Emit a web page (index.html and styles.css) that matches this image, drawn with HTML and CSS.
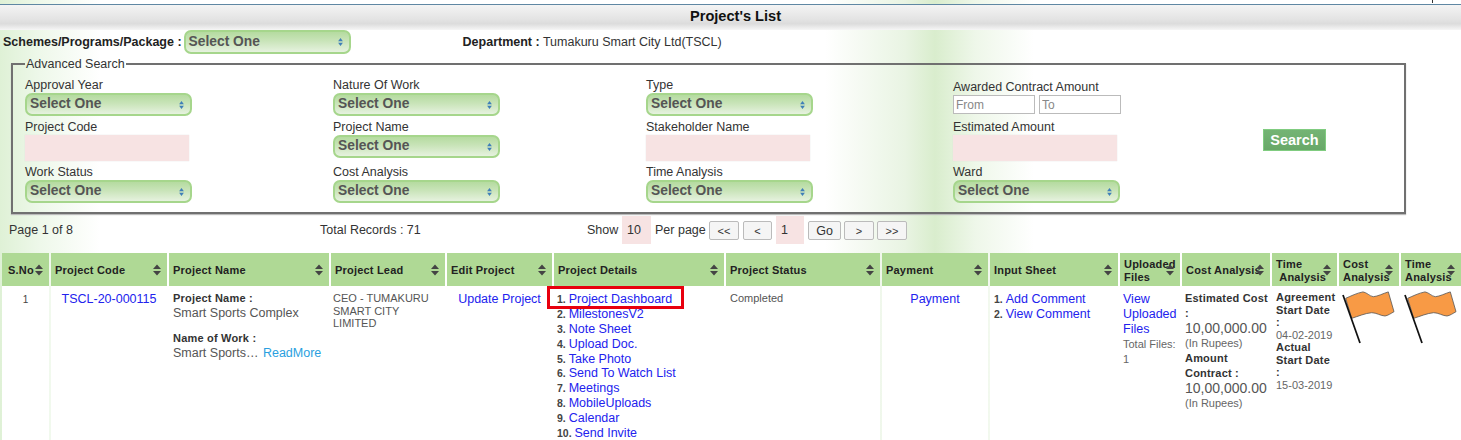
FILE: index.html
```html
<!DOCTYPE html>
<html lang="en">
<head>
<meta charset="utf-8">
<title>Project's List</title>
<link rel="stylesheet" href="styles.css">
</head>
<body>
<svg class="defs" width="0" height="0" aria-hidden="true">
  <symbol id="sort" viewBox="0 0 8 12"><path d="M4 0.5 8 5H0zM0 7h8l-4 4.5z"/></symbol>
  <symbol id="ud" viewBox="0 0 6 10"><path d="M3 0 6 4H0zM0 6h6l-3 4z"/></symbol>
  <symbol id="flag" viewBox="0 0 54 54">
    <path d="M3.7 7.3C9 5 15 2 21 .9c4 .6 6.500 4.300 10.300 4.800C36 5.300 41 2.500 46.300 .9L52 20.700c-3 1.700-6 3.800-9 4.300-4.500-.2-8.500-3.300-13.300-3.300-6.500.5-13.500 3.600-20 5.600z" fill="#f89a45" stroke="#555" stroke-width=".8"/>
    <path d="M1 4 18 52" fill="none" stroke="#111" stroke-width="1.700"/>
  </symbol>
</svg>
<div class="topstrip"><span class="tick"></span></div>
<h1 class="title">Project's List</h1>

<div class="scheme-row">
  <span class="strong">Schemes/Programs/Package :</span>
  <div class="select"><span>Select One</span><svg class="ud"><use href="#ud"/></svg></div>
  <span class="dept"><span class="strong">Department :</span> Tumakuru Smart City Ltd(TSCL)</span>
</div>

<fieldset class="search">
  <legend>Advanced Search</legend>
  <div class="search-grid">
    <div class="field"><label>Approval Year</label><div class="select"><span>Select One</span><svg class="ud"><use href="#ud"/></svg></div></div>
    <div class="field"><label>Nature Of Work</label><div class="select"><span>Select One</span><svg class="ud"><use href="#ud"/></svg></div></div>
    <div class="field"><label>Type</label><div class="select"><span>Select One</span><svg class="ud"><use href="#ud"/></svg></div></div>
    <div class="field field-range"><label>Awarded Contract Amount</label><div class="range"><input class="small" placeholder="From"><input class="small" placeholder="To"></div></div>
    <div></div>

    <div class="field"><label>Project Code</label><input class="pink"></div>
    <div class="field"><label>Project Name</label><div class="select"><span>Select One</span><svg class="ud"><use href="#ud"/></svg></div></div>
    <div class="field"><label>Stakeholder Name</label><input class="pink"></div>
    <div class="field"><label>Estimated Amount</label><input class="pink"></div>
    <div class="search-cell"><button class="search-btn" type="button">Search</button></div>

    <div class="field"><label>Work Status</label><div class="select"><span>Select One</span><svg class="ud"><use href="#ud"/></svg></div></div>
    <div class="field"><label>Cost Analysis</label><div class="select"><span>Select One</span><svg class="ud"><use href="#ud"/></svg></div></div>
    <div class="field"><label>Time Analysis</label><div class="select"><span>Select One</span><svg class="ud"><use href="#ud"/></svg></div></div>
    <div class="field"><label>Ward</label><div class="select"><span>Select One</span><svg class="ud"><use href="#ud"/></svg></div></div>
    <div></div>
  </div>
</fieldset>

<div class="pager">
  <span class="pg-page">Page 1 of 8</span>
  <span class="pg-total">Total Records : 71</span>
  <span class="pg-show">Show</span>
  <input class="pg-input" value="10">
  <span class="pg-per">Per page</span>
  <button class="pg-btn b1" type="button">&lt;&lt;</button>
  <button class="pg-btn b2" type="button">&lt;</button>
  <input class="pg-input cur" value="1">
  <button class="pg-btn b3" type="button">Go</button>
  <button class="pg-btn b4" type="button">&gt;</button>
  <button class="pg-btn b5" type="button">&gt;&gt;</button>
</div>

<table class="grid">
  <colgroup>
    <col class="c1"><col class="c2"><col class="c3"><col class="c4"><col class="c5"><col class="c6"><col class="c7"><col class="c8"><col class="c9"><col class="c10"><col class="c11"><col class="c12"><col class="c13"><col class="c14">
  </colgroup>
  <thead>
    <tr>
      <th class="th-sno">S.No<svg class="sort"><use href="#sort"/></svg></th>
      <th>Project Code<svg class="sort"><use href="#sort"/></svg></th>
      <th>Project Name<svg class="sort"><use href="#sort"/></svg></th>
      <th>Project Lead<svg class="sort"><use href="#sort"/></svg></th>
      <th>Edit Project<svg class="sort"><use href="#sort"/></svg></th>
      <th>Project Details<svg class="sort"><use href="#sort"/></svg></th>
      <th>Project Status<svg class="sort"><use href="#sort"/></svg></th>
      <th>Payment<svg class="sort"><use href="#sort"/></svg></th>
      <th>Input Sheet<svg class="sort"><use href="#sort"/></svg></th>
      <th>Uploaded Files<svg class="sort"><use href="#sort"/></svg></th>
      <th>Cost Analysis<svg class="sort"><use href="#sort"/></svg></th>
      <th>Time<br>&nbsp;Analysis<svg class="sort"><use href="#sort"/></svg></th>
      <th>Cost<br>Analysis<svg class="sort"><use href="#sort"/></svg></th>
      <th>Time<br>Analysis<svg class="sort"><use href="#sort"/></svg></th>
    </tr>
  </thead>
  <tbody>
    <tr>
      <td class="center sno">1</td>
      <td class="center"><a href="#">TSCL-20-000115</a></td>
      <td class="name">
        <div class="lbl">Project Name :</div>
        <div class="val">Smart Sports Complex</div>
        <div class="lbl gap">Name of Work :</div>
        <div class="val">Smart Sports… <a class="more" href="#">ReadMore</a></div>
      </td>
      <td class="lead">CEO - TUMAKURU SMART CITY LIMITED</td>
      <td class="center"><a href="#">Update Project</a></td>
      <td class="list-cell details">
        <ol class="links">
          <li class="marked"><a href="#">Project Dashboard</a><span class="redbox"></span></li>
          <li><a href="#">MilestonesV2</a></li>
          <li><a href="#">Note Sheet</a></li>
          <li><a href="#">Upload Doc.</a></li>
          <li><a href="#">Take Photo</a></li>
          <li><a href="#">Send To Watch List</a></li>
          <li><a href="#">Meetings</a></li>
          <li><a href="#">MobileUploads</a></li>
          <li><a href="#">Calendar</a></li>
          <li><a href="#">Send Invite</a></li>
        </ol>
      </td>
      <td class="status">Completed</td>
      <td class="center"><a href="#">Payment</a></td>
      <td class="list-cell">
        <ol class="links">
          <li><a href="#">Add Comment</a></li>
          <li><a href="#">View Comment</a></li>
        </ol>
      </td>
      <td class="files">
        <a href="#">View Uploaded Files</a>
        <div class="small-val">Total Files: 1</div>
      </td>
      <td class="cost">
        <div class="lbl">Estimated Cost :</div>
        <div class="amount">10,00,000.00</div>
        <div class="small-val">(In Rupees)</div>
        <div class="lbl">Amount Contract :</div>
        <div class="amount">10,00,000.00</div>
        <div class="small-val">(In Rupees)</div>
      </td>
      <td class="time">
        <div class="lbl">Agreement Start Date :</div>
        <div class="small-val">04-02-2019</div>
        <div class="lbl">Actual Start Date :</div>
        <div class="small-val">15-03-2019</div>
      </td>
      <td class="flagcell"><svg class="flag"><use href="#flag"/></svg></td>
      <td class="flagcell"><svg class="flag"><use href="#flag"/></svg></td>
    </tr>
  </tbody>
</table>
</body>
</html>
```

FILE: styles.css
```css
* { box-sizing: border-box; }
html, body { height: 440px; overflow: hidden; }
body {
  margin: 0;
  font-family: "Liberation Sans", Arial, sans-serif;
  font-size: 12.500px;
  color: #333;
  background-color: #fff;
  background-image:
    linear-gradient(90deg, #dff1d6 0, #eef8ea 40px, rgba(255,255,255,0) 100px),
    linear-gradient(90deg, rgba(255,255,255,0) 825px, #e9f4e3 905px, #d9edcd 935px, #eef7e9 975px, rgba(255,255,255,0) 1034px);
  background-repeat: no-repeat;
}
.defs { position: absolute; }

.topstrip { height: 5px; border-bottom: 1px solid #5f87a3; display: flex; justify-content: flex-end; padding-right: 28px; }
.tick { width: 1px; height: 3px; background: #333; }
.title {
  margin: 0;
  height: 25px;
  padding-left: 10px;
  font-size: 14.600px;
  line-height: 22px;
  font-weight: bold;
  color: #111;
  text-align: center;
  background: linear-gradient(#f4f4f4, #e4e4e4 55%, #dcdcdc 75%, #f6f6f6);
}
.strong { font-weight: bold; color: #222; }

.scheme-row { display: flex; align-items: center; height: 24px; padding-left: 3px; color: #333; }
.scheme-row .select { margin-left: 2px; height: 24px; }
.dept { margin-left: 112px; }

.select {
  width: 167px;
  height: 23px;
  display: flex;
  align-items: center;
  justify-content: space-between;
  padding: 0 6px 2px 3px;
  border: 2px solid #a6d68c;
  border-radius: 7px;
  background: linear-gradient(#b5dba0, #c9e4b9 45%, #e6f2df);
  color: #555;
  font-size: 13.800px;
  font-weight: bold;
}
.ud { width: 5px; height: 8px; fill: #3f7fb8; margin-top: 2px; }

.search {
  margin: 3px 0 0 11px;
  padding: 0 0 8px 12px;
  width: 1395px;
  height: 157px;
  border: 2px solid #707070;
  box-shadow: 0 1px 1px #bbb;
  min-width: 0;
}
.search legend { padding: 0 1px; font-size: 12.500px; line-height: 14px; color: #333; }
.search-grid {
  display: grid;
  grid-template-columns: 308px 313px 307px 310px 1fr;
  grid-template-rows: 42px 45px 44px;
  margin-top: 7px;
}
.field { display: flex; flex-direction: column; align-items: flex-start; }
.field label { height: 15px; line-height: 14px; color: #333; }
.field-range label { margin-top: 2px; }
.range { display: flex; gap: 4px; }
.small { width: 82px; height: 19px; padding: 0 2px; border: 1px solid #bbb; background: #fff; font: 12px "Liberation Sans", Arial, sans-serif; }
.small::placeholder { color: #888; }
.pink { width: 164px; height: 26px; border: 0; background: #f7e3e3; box-shadow: 0 0 1px #ddd; }
.search-cell { display: flex; align-items: flex-start; padding-top: 9px; }
.search-btn {
  width: 63px;
  height: 22px;
  padding: 0;
  border: 1px solid #80cc80;
  background: linear-gradient(#74b474, #68a868);
  color: #fff;
  font: bold 14.500px/18px "Liberation Sans", Arial, sans-serif;
}

.pager { position: relative; height: 37px; margin-top: 2px; }
.pager > * { position: absolute; }
.pg-page { left: 9px; top: 7px; }
.pg-total { left: 320px; top: 7px; }
.pg-show { left: 587px; top: 7px; }
.pg-per { left: 655px; top: 7px; }
.pg-input { left: 622px; top: 0; width: 29px; height: 28px; padding: 0 0 0 5px; border: 0; background: #f7e3e3; color: #333; font: 12.500px "Liberation Sans", Arial, sans-serif; }
.pg-input.cur { left: 776px; width: 28px; }
.pg-btn { top: 5px; height: 19px; padding: 0; border: 1px solid #bbb; border-radius: 2px; background: #f5f5f5; color: #333; font: 11px "Liberation Sans", Arial, sans-serif; }
.b1 { left: 709px; width: 30px; }
.b2 { left: 743px; width: 29px; }
.b3 { left: 808px; width: 33px; font-size: 12.500px; }
.b4 { left: 844px; width: 30px; }
.b5 { left: 877px; width: 30px; }

.grid {
  width: 1463px;
  table-layout: fixed;
  border-collapse: separate;
  border-spacing: 2px 0;
  margin: 0;
  background: transparent;
}
.c1 { width: 47px; } .c2 { width: 116px; } .c3 { width: 160px; } .c4 { width: 114px; }
.c5 { width: 105px; } .c6 { width: 170px; } .c7 { width: 154px; } .c8 { width: 106px; }
.c9 { width: 128px; } .c10 { width: 60px; } .c11 { width: 88px; } .c12 { width: 65px; }
.c13 { width: 60px; } .c14 { width: 60px; }
th {
  position: relative;
  height: 33px;
  padding: 2px 2px 0 4px;
  background: #afd995;
  color: #222;
  font-size: 11px;
  line-height: 13px;
  font-weight: bold;
  text-align: left;
  letter-spacing: .2px;
}
.th-sno { padding-left: 6px; }
.sort { position: absolute; right: 6px; top: 11px; width: 8px; height: 12px; fill: #444; }
td { background: #fff; vertical-align: top; padding: 6px 4px 0; font-size: 12.500px; line-height: 15px; color: #444; }
a { color: #2222ee; text-decoration: none; font-size: 12.500px; }
.center { text-align: center; }
.sno { font-size: 10px; }
.name { padding-top: 5px; }
.lbl { font-size: 11px; font-weight: bold; color: #333; line-height: 15px; letter-spacing: .2px; }
.lbl.gap { margin-top: 10px; }
.val { font-size: 12.500px; line-height: 15px; color: #555; }
a.more { color: #2a9fe0; margin-left: 1px; }
.lead { font-size: 11px; line-height: 12.500px; padding: 6px 2px 0; color: #555; }
.status { font-size: 11px; color: #555; padding-top: 5px; }
.links { margin: 0; padding: 0; list-style-position: inside; }
.links li { height: 14.900px; line-height: 15px; font-size: 10.500px; font-weight: bold; color: #444; position: relative; white-space: nowrap; }
.links li a { font-weight: normal; }
.details { padding-left: 3px; }
.redbox { position: absolute; left: -10px; top: -6px; width: 137px; height: 23px; border: 3px solid #e8000e; }
.files { padding: 6px 0 0 3px; }
.small-val { font-size: 11px; line-height: 14.500px; color: #666; }
.amount { font-size: 14px; line-height: 15px; color: #555; }
.cost { padding: 5px 0 0 3px; }
.time { padding: 5px 4px 0; }
.time .lbl { line-height: 12.500px; padding-top: 0; }
.time .small-val { line-height: 12.500px; }
.flagcell { padding: 5px 0 0 3px; }
.flag { width: 54px; height: 54px; display: block; }
```
